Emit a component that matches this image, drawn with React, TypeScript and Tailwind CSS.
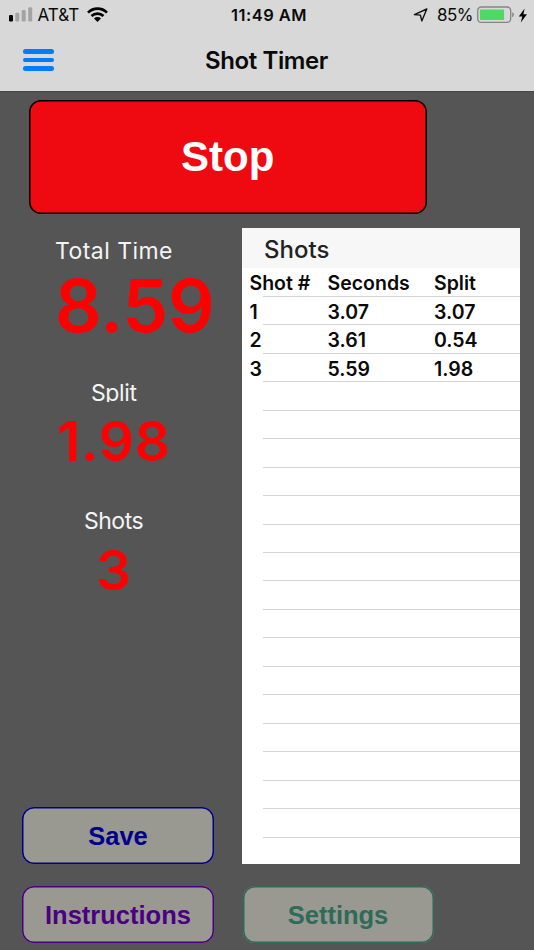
import React from "react";

const rows: string[][] = [
  ["Shot #", "Seconds", "Split"],
  ["1", "3.07", "3.07"],
  ["2", "3.61", "0.54"],
  ["3", "5.59", "1.98"],
  ...Array.from({ length: 16 }, () => ["", "", ""]),
];

function StatusBar() {
  return (
    <div className="flex h-[30px] items-center justify-between">
      <div className="flex w-[231px] items-center pl-[9px]">
        <svg width="24" height="16" viewBox="0 0 24 16">
          <rect x="0" y="8" width="4" height="6.5" rx="1.2" fill="#000" />
          <rect x="6.3" y="5.7" width="4" height="8.8" rx="1.2" fill="#a3a3a3" />
          <rect x="12.7" y="3" width="4" height="11.5" rx="1.2" fill="#a3a3a3" />
          <rect x="19.2" y="0.3" width="4" height="14.2" rx="1.2" fill="#a3a3a3" />
        </svg>
        <span className="ml-[4.5px] w-[41.5px] text-[17px] leading-[30px] whitespace-nowrap">AT&amp;T</span>
        <svg className="ml-[8px]" width="22" height="16" viewBox="0 0 22 16">
          <g fill="none" stroke="#000" strokeWidth="2.7">
            <path d="M1 5.6 C6.3 0.4 14.7 0.4 20 5.6" />
            <path d="M4.5 9.1 C8 5.8 13 5.8 16.5 9.1" />
          </g>
          <path d="M7 11.4 C9 9.6 12 9.6 14 11.4 L10.5 15 Z" fill="#000" />
        </svg>
      </div>
      <span className="text-[16.5px] leading-[30px] font-semibold tracking-[0.5px] whitespace-nowrap">11:49 AM</span>
      <div className="flex w-[227px] items-center justify-end pr-[6px]">
        <svg className="mr-[9px]" width="15" height="14" viewBox="0 0 15 14">
          <path d="M13.8 1 L1.4 6.6 L7.4 7.1 L8.8 12.9 Z" fill="none" stroke="#111" strokeWidth="1.4" strokeLinejoin="round" />
        </svg>
        <span className="w-[36px] text-[17px] leading-[30px] tracking-[-0.6px] whitespace-nowrap">85%</span>
        <svg className="ml-[4px]" width="38" height="18" viewBox="0 0 38 18">
          <rect x="0.7" y="1" width="33" height="15.4" rx="3.6" fill="none" stroke="#858585" strokeWidth="1.3" />
          <rect x="2.9" y="3.6" width="24.2" height="10.4" rx="0.8" fill="#4cd964" />
          <path d="M35.2 6.2 C37.4 7 37.4 10.4 35.2 11.2 Z" fill="#858585" />
        </svg>
        <svg className="ml-[3px]" width="10" height="15" viewBox="0 0 10 15">
          <path d="M6.6 0.4 L0.8 8.5 H4.3 L2.8 14.4 L9 6.2 H5.4 Z" fill="#000" />
        </svg>
      </div>
    </div>
  );
}

function ActionButton({ label, className }: { label: string; className: string }) {
  return (
    <button
      className={`flex h-[57px] items-center justify-center rounded-[12px] bg-[#999891] pt-px font-['Liberation_Sans',sans-serif] text-[25.5px] font-bold shadow-[inset_0_0_0_1.5px_currentColor] ${className}`}
    >
      {label}
    </button>
  );
}

export default function App() {
  return (
    <div className="flex h-[950px] w-[534px] flex-col overflow-hidden bg-[#555555] font-['Inter',sans-serif] text-[#0a0a0a]">
      <header className="h-[92px] shrink-0 border-b border-[#484848] bg-[#d8d8d8]">
        <StatusBar />
        <div className="flex h-[60px] items-center">
          <div className="flex w-[205px] flex-col gap-[4px] pl-[23px]">
            <i className="h-[4.5px] w-[31px] rounded-full bg-[#007aff]" />
            <i className="h-[4.5px] w-[31px] rounded-full bg-[#007aff]" />
            <i className="h-[4.5px] w-[31px] rounded-full bg-[#007aff]" />
          </div>
          <h1 className="pt-px text-[24px] leading-[60px] font-semibold tracking-[-0.4px] whitespace-nowrap">Shot Timer</h1>
        </div>
      </header>

      <button className="mt-[8px] ml-[28.5px] flex h-[114px] w-[398.5px] shrink-0 items-center justify-center rounded-[12px] bg-[#ef0a12] pb-px font-['Liberation_Sans',sans-serif] text-[42px] font-bold text-white shadow-[inset_0_0_0_1.5px_black]">
        Stop
      </button>

      <div className="mt-[14px] flex h-[636px] shrink-0">
        <section className="flex w-[242px] flex-col pl-[22px] whitespace-nowrap text-[#f4f4f4]">
          <div className="mt-[14px] h-[18px] overflow-hidden pl-[33px] text-[23px] leading-[18px] tracking-[0.45px]">Total Time</div>
          <div className="mt-[6px] h-[80px] pl-[33px] text-[73px] leading-[80px] font-semibold tracking-[-0.2px] text-[#ff0000]">8.59</div>
          <div className="mt-[37px] h-[19px] overflow-hidden pl-[69px] text-[23px] leading-[20px] tracking-[-0.4px]">Split</div>
          <div className="mt-[9px] h-[60px] pl-[35px] text-[55px] leading-[61px] font-semibold tracking-[0.8px] text-[#ff0000]">1.98</div>
          <div className="mt-[35px] h-[30px] pl-[62px] text-[23px] leading-[31px] tracking-[-0.5px]">Shots</div>
          <div className="mt-[4px] h-[60px] pl-[74px] text-[55px] leading-[60px] font-semibold text-[#ff0000]">3</div>
          <ActionButton label="Save" className="mt-auto w-[192px] text-[#00008b]" />
        </section>

        <section className="w-[277.5px] bg-white">
          <h2 className="h-[40.3px] bg-[#f7f7f7] pl-[22px] text-[24px] leading-[43px] font-medium text-[#222]">Shots</h2>
          {rows.map((row, i) => (
            <div key={i} className="flex h-[28.47px] flex-col">
              <div className="grid flex-1 grid-cols-[78px_106.5px_1fr] pl-[7.5px] text-[19.5px] leading-[31px] font-semibold whitespace-nowrap">
                {row.map((cell, j) => (
                  <span key={j} className="h-[27px]">{cell}</span>
                ))}
              </div>
              <div className="ml-[21px] h-px bg-[#d4d4d4]" />
            </div>
          ))}
        </section>
      </div>

      <div className="mt-[22px] flex shrink-0 gap-[28.5px] pl-[22px]">
        <ActionButton label="Instructions" className="w-[192px] text-[#4b0082]" />
        <ActionButton label="Settings" className="w-[191px] text-[#2e6b58]" />
      </div>
    </div>
  );
}
